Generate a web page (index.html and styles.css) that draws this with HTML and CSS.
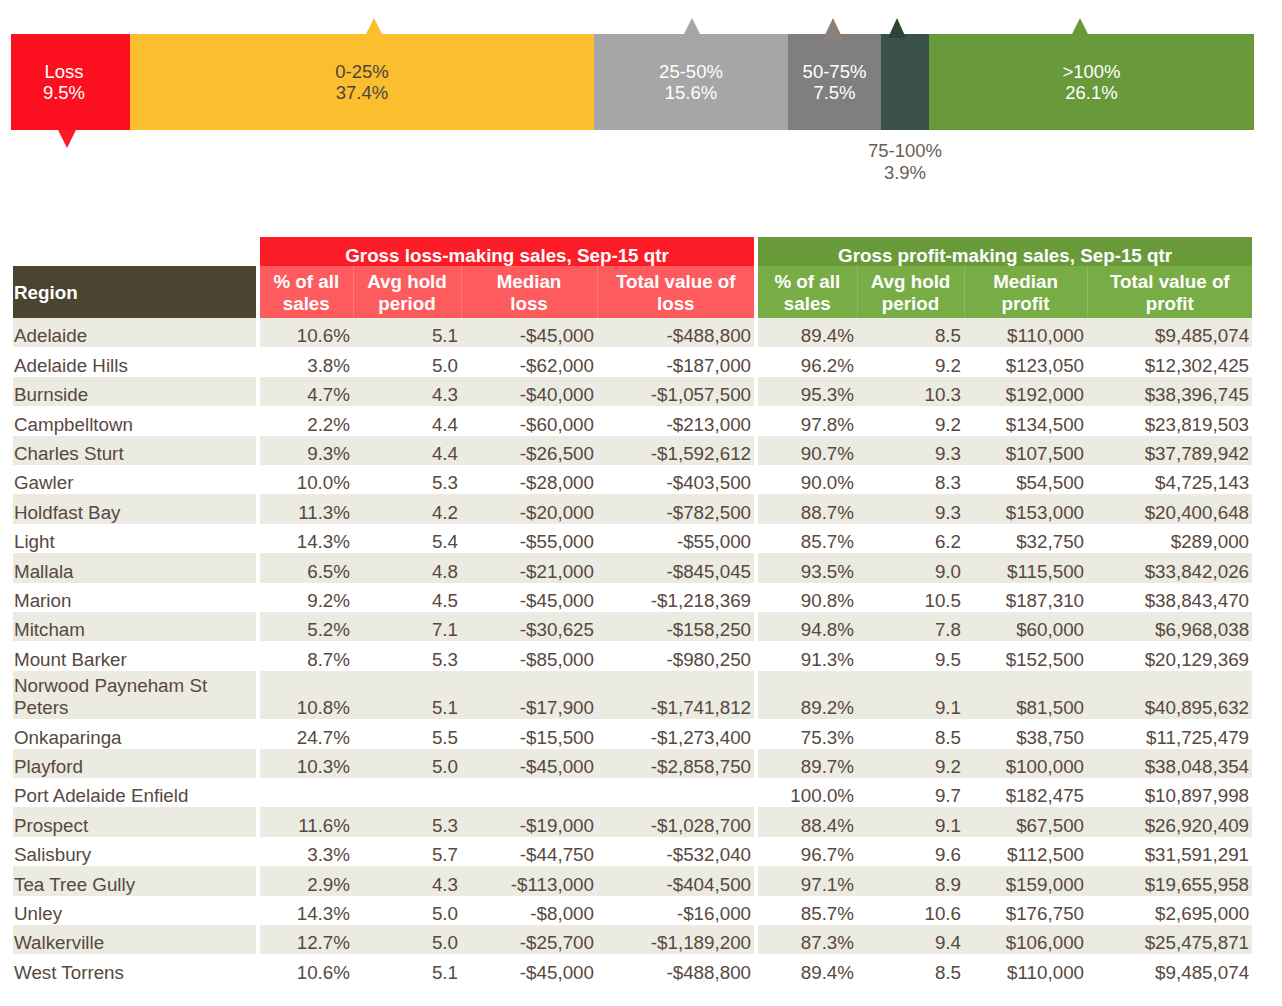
FILE: index.html
```html
<!DOCTYPE html>
<html lang="en">
<head>
<meta charset="utf-8">
<title>Gross loss and profit-making sales</title>
<link rel="stylesheet" href="styles.css">
</head>
<body>
<div class="page">
  <div class="bar">
    <div class="seg seg-loss"><span class="lbl">Loss<br>9.5%</span><i class="tri tri-down tri-loss"></i></div>
    <div class="seg seg-q1"><span class="lbl">0-25%<br>37.4%</span><i class="tri tri-up tri-q1"></i></div>
    <div class="seg seg-q2"><span class="lbl">25-50%<br>15.6%</span><i class="tri tri-up tri-q2"></i></div>
    <div class="seg seg-q3"><span class="lbl">50-75%<br>7.5%</span><i class="tri tri-up tri-q3"></i></div>
    <div class="seg seg-q4"><i class="tri tri-up tri-q4"></i><span class="below">75-100%<br>3.9%</span></div>
    <div class="seg seg-q5"><span class="lbl">&gt;100%<br>26.1%</span><i class="tri tri-up tri-q5"></i></div>
  </div>

  <table class="data">
    <colgroup>
      <col class="c-region">
      <col class="c-gap">
      <col class="c-l1"><col class="c-l2"><col class="c-l3"><col class="c-l4">
      <col class="c-gap">
      <col class="c-p1"><col class="c-p2"><col class="c-p3"><col class="c-p4">
    </colgroup>
    <thead>
      <tr class="grp">
        <th class="blank"></th>
        <th class="gap"></th>
        <th class="grp-loss" colspan="4">Gross loss-making sales, Sep-15 qtr</th>
        <th class="gap"></th>
        <th class="grp-profit" colspan="4">Gross profit-making sales, Sep-15 qtr</th>
      </tr>
      <tr class="sub">
        <th class="region-h">Region</th>
        <th class="gap"></th>
        <th class="sub-loss">% of all<br>sales</th>
        <th class="sub-loss sep">Avg hold<br>period</th>
        <th class="sub-loss sep">Median<br>loss</th>
        <th class="sub-loss sep">Total value of<br>loss</th>
        <th class="gap"></th>
        <th class="sub-profit">% of all<br>sales</th>
        <th class="sub-profit sep">Avg hold<br>period</th>
        <th class="sub-profit sep">Median<br>profit</th>
        <th class="sub-profit sep">Total value of<br>profit</th>
      </tr>
    </thead>
    <tbody>
      <tr><td class="rg">Adelaide</td><td class="gap"></td><td>10.6%</td><td>5.1</td><td>-$45,000</td><td>-$488,800</td><td class="gap"></td><td>89.4%</td><td>8.5</td><td>$110,000</td><td>$9,485,074</td></tr>
      <tr><td class="rg">Adelaide Hills</td><td class="gap"></td><td>3.8%</td><td>5.0</td><td>-$62,000</td><td>-$187,000</td><td class="gap"></td><td>96.2%</td><td>9.2</td><td>$123,050</td><td>$12,302,425</td></tr>
      <tr><td class="rg">Burnside</td><td class="gap"></td><td>4.7%</td><td>4.3</td><td>-$40,000</td><td>-$1,057,500</td><td class="gap"></td><td>95.3%</td><td>10.3</td><td>$192,000</td><td>$38,396,745</td></tr>
      <tr><td class="rg">Campbelltown</td><td class="gap"></td><td>2.2%</td><td>4.4</td><td>-$60,000</td><td>-$213,000</td><td class="gap"></td><td>97.8%</td><td>9.2</td><td>$134,500</td><td>$23,819,503</td></tr>
      <tr><td class="rg">Charles Sturt</td><td class="gap"></td><td>9.3%</td><td>4.4</td><td>-$26,500</td><td>-$1,592,612</td><td class="gap"></td><td>90.7%</td><td>9.3</td><td>$107,500</td><td>$37,789,942</td></tr>
      <tr><td class="rg">Gawler</td><td class="gap"></td><td>10.0%</td><td>5.3</td><td>-$28,000</td><td>-$403,500</td><td class="gap"></td><td>90.0%</td><td>8.3</td><td>$54,500</td><td>$4,725,143</td></tr>
      <tr><td class="rg">Holdfast Bay</td><td class="gap"></td><td>11.3%</td><td>4.2</td><td>-$20,000</td><td>-$782,500</td><td class="gap"></td><td>88.7%</td><td>9.3</td><td>$153,000</td><td>$20,400,648</td></tr>
      <tr><td class="rg">Light</td><td class="gap"></td><td>14.3%</td><td>5.4</td><td>-$55,000</td><td>-$55,000</td><td class="gap"></td><td>85.7%</td><td>6.2</td><td>$32,750</td><td>$289,000</td></tr>
      <tr><td class="rg">Mallala</td><td class="gap"></td><td>6.5%</td><td>4.8</td><td>-$21,000</td><td>-$845,045</td><td class="gap"></td><td>93.5%</td><td>9.0</td><td>$115,500</td><td>$33,842,026</td></tr>
      <tr><td class="rg">Marion</td><td class="gap"></td><td>9.2%</td><td>4.5</td><td>-$45,000</td><td>-$1,218,369</td><td class="gap"></td><td>90.8%</td><td>10.5</td><td>$187,310</td><td>$38,843,470</td></tr>
      <tr><td class="rg">Mitcham</td><td class="gap"></td><td>5.2%</td><td>7.1</td><td>-$30,625</td><td>-$158,250</td><td class="gap"></td><td>94.8%</td><td>7.8</td><td>$60,000</td><td>$6,968,038</td></tr>
      <tr><td class="rg">Mount Barker</td><td class="gap"></td><td>8.7%</td><td>5.3</td><td>-$85,000</td><td>-$980,250</td><td class="gap"></td><td>91.3%</td><td>9.5</td><td>$152,500</td><td>$20,129,369</td></tr>
      <tr class="tall"><td class="rg">Norwood Payneham St Peters</td><td class="gap"></td><td>10.8%</td><td>5.1</td><td>-$17,900</td><td>-$1,741,812</td><td class="gap"></td><td>89.2%</td><td>9.1</td><td>$81,500</td><td>$40,895,632</td></tr>
      <tr><td class="rg">Onkaparinga</td><td class="gap"></td><td>24.7%</td><td>5.5</td><td>-$15,500</td><td>-$1,273,400</td><td class="gap"></td><td>75.3%</td><td>8.5</td><td>$38,750</td><td>$11,725,479</td></tr>
      <tr><td class="rg">Playford</td><td class="gap"></td><td>10.3%</td><td>5.0</td><td>-$45,000</td><td>-$2,858,750</td><td class="gap"></td><td>89.7%</td><td>9.2</td><td>$100,000</td><td>$38,048,354</td></tr>
      <tr><td class="rg">Port Adelaide Enfield</td><td class="gap"></td><td></td><td></td><td></td><td></td><td class="gap"></td><td>100.0%</td><td>9.7</td><td>$182,475</td><td>$10,897,998</td></tr>
      <tr><td class="rg">Prospect</td><td class="gap"></td><td>11.6%</td><td>5.3</td><td>-$19,000</td><td>-$1,028,700</td><td class="gap"></td><td>88.4%</td><td>9.1</td><td>$67,500</td><td>$26,920,409</td></tr>
      <tr><td class="rg">Salisbury</td><td class="gap"></td><td>3.3%</td><td>5.7</td><td>-$44,750</td><td>-$532,040</td><td class="gap"></td><td>96.7%</td><td>9.6</td><td>$112,500</td><td>$31,591,291</td></tr>
      <tr><td class="rg">Tea Tree Gully</td><td class="gap"></td><td>2.9%</td><td>4.3</td><td>-$113,000</td><td>-$404,500</td><td class="gap"></td><td>97.1%</td><td>8.9</td><td>$159,000</td><td>$19,655,958</td></tr>
      <tr><td class="rg">Unley</td><td class="gap"></td><td>14.3%</td><td>5.0</td><td>-$8,000</td><td>-$16,000</td><td class="gap"></td><td>85.7%</td><td>10.6</td><td>$176,750</td><td>$2,695,000</td></tr>
      <tr><td class="rg">Walkerville</td><td class="gap"></td><td>12.7%</td><td>5.0</td><td>-$25,700</td><td>-$1,189,200</td><td class="gap"></td><td>87.3%</td><td>9.4</td><td>$106,000</td><td>$25,475,871</td></tr>
      <tr><td class="rg">West Torrens</td><td class="gap"></td><td>10.6%</td><td>5.1</td><td>-$45,000</td><td>-$488,800</td><td class="gap"></td><td>89.4%</td><td>8.5</td><td>$110,000</td><td>$9,485,074</td></tr>
    </tbody>
  </table>
</div>
</body>
</html>
```

FILE: styles.css
```css
html, body {
  margin: 0;
  padding: 0;
  background: #ffffff;
}

body {
  font-family: "Liberation Sans", Arial, Helvetica, sans-serif;
  font-size: 18.5px;
  color: #574840;
}

.page {
  padding: 34px 0 0 11px;
}

/* ---------- distribution bar ---------- */
.bar {
  display: flex;
  width: 1243px;
  height: 96px;
}

.seg {
  position: relative;
  display: flex;
  align-items: center;
  justify-content: center;
  text-align: center;
  line-height: 21px;
  color: #ffffff;
  flex: none;
}

.lbl {
  display: block;
  margin-top: -1px;
}

.seg-loss { width: 119px; background: #fc0f1f; padding-right: 13px; box-sizing: border-box; }
.seg-q1 { width: 464px; background: #fbbe2e; color: #4b4440; }
.seg-q2 { width: 194px; background: #a6a6a6; }
.seg-q3 { width: 93px; background: #7f7f7f; }
.seg-q4 { width: 48px; background: #3a514a; }
.seg-q5 { width: 325px; background: #68993a; }

.below {
  position: absolute;
  top: 106px;
  left: 50%;
  transform: translateX(-50%);
  white-space: nowrap;
  color: #6b5d55;
  line-height: 22px;
}

.tri {
  position: absolute;
  width: 0;
  height: 0;
  border-style: solid;
  border-color: transparent;
}

.tri-up {
  bottom: 100%;
  border-width: 0 8px 16px 8px;
}

.tri-down {
  top: 100%;
  border-width: 18px 9px 0 9px;
}

.tri-loss { left: 47px; border-top-color: #fc1a26; }
.tri-q1 { left: 236px; border-bottom-color: #fbbe2e; }
.tri-q2 { left: 90px; border-bottom-color: #a6a6a6; }
.tri-q3 {
  left: 35px;
  bottom: auto;
  top: -16px;
  border-width: 0 10px 21px 10px;
  border-bottom-color: #8c7f78;
}
.tri-q4 {
  left: 7px;
  bottom: auto;
  top: -16px;
  border-width: 0 9px 20px 9px;
  border-bottom-color: #2c4530;
}
.tri-q5 { left: 143px; border-bottom-color: #68993a; }

/* ---------- data table ---------- */
.data {
  margin: 107px 0 0 2px;
  border-collapse: collapse;
  border-spacing: 0;
  table-layout: fixed;
  width: 1239px;
  font-size: 18.8px;
}

.c-region { width: 243px; }
.c-gap { width: 4px; }
.c-l1 { width: 93px; }
.c-l2 { width: 108px; }
.c-l3 { width: 136px; }
.c-l4 { width: 157px; }
.c-p1 { width: 99px; }
.c-p2 { width: 107px; }
.c-p3 { width: 123px; }
.c-p4 { width: 165px; }

.data th {
  font-weight: bold;
  color: #ffffff;
  line-height: 22px;
  padding: 0;
}

.grp th {
  height: 29px;
  vertical-align: bottom;
  line-height: 20px;
}

.grp-loss { background: #fc1c27; }
.grp-profit { background: #689a3a; }

.sub th {
  height: 50px;
  vertical-align: middle;
  padding-top: 2px;
}

.region-h {
  background: #4a4430;
  text-align: left;
  padding-left: 1px !important;
}

.sub-loss { background: #fd5b5e; }
.sub-profit { background: #78ac44; }
.sub-loss.sep { border-left: 1px solid #fd7a7c; }
.sub-profit.sep { border-left: 1px solid #8cba5f; }

.data td {
  height: 29.4px;
  line-height: 22px;
  padding: 0 3px 0 0;
  vertical-align: bottom;
  text-align: right;
  white-space: nowrap;
}

.data td.rg {
  text-align: left;
  padding: 0 0 0 1px;
  white-space: normal;
}

.data tr.tall td {
  height: 48.6px;
}

.data td.gap,
.data th.gap {
  padding: 0;
  background: transparent;
}

.data tbody tr:nth-child(odd) td:not(.gap) {
  background: #ecebe1;
}
```
